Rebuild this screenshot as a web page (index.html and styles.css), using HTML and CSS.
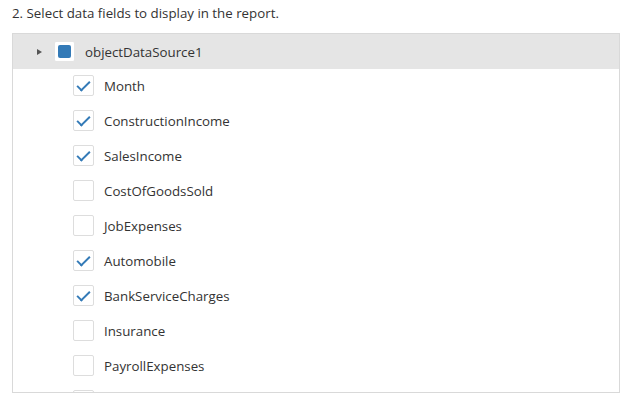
FILE: index.html
```html
<!DOCTYPE html>
<html lang="en">

<head>
    <meta charset="UTF-8">
    <meta name="viewport" content="width=device-width, initial-scale=1.0">
    <title>Report Wizard - Select Fields</title>
    <link rel="stylesheet" href="styles.css">
</head>

<body>
    <div class="wizard-step">
        <p class="step-title">2. Select data fields to display in the report.</p>

        <div class="field-tree">
            <div class="tree-root">
                <span class="expander"></span>
                <span class="check partial"><span class="partial-mark"></span></span>
                <span class="node-label">objectDataSource1</span>
            </div>

            <ul class="field-list">
                <li class="field"><span class="check checked"></span><span class="node-label">Month</span></li>
                <li class="field"><span class="check checked"></span><span class="node-label">ConstructionIncome</span></li>
                <li class="field"><span class="check checked"></span><span class="node-label">SalesIncome</span></li>
                <li class="field"><span class="check"></span><span class="node-label">CostOfGoodsSold</span></li>
                <li class="field"><span class="check"></span><span class="node-label">JobExpenses</span></li>
                <li class="field"><span class="check checked"></span><span class="node-label">Automobile</span></li>
                <li class="field"><span class="check checked"></span><span class="node-label">BankServiceCharges</span></li>
                <li class="field"><span class="check"></span><span class="node-label">Insurance</span></li>
                <li class="field"><span class="check"></span><span class="node-label">PayrollExpenses</span></li>
                <!-- next row is scrolled out of view -->
                <li class="field"><span class="check"></span></li>
            </ul>
        </div>
    </div>
</body>

</html>
```

FILE: styles.css
```css
/* Global Styles */
* {
    margin: 0;
    padding: 0;
    box-sizing: border-box;
    font-family: 'Open Sans', 'Noto Sans', sans-serif;
}

body {
    background-color: #fff;
    color: #333;
}

.wizard-step {
    padding: 4px 8px 0 12px;
}

.step-title {
    font-size: 13.3px;
    line-height: 18px;
    color: #333;
    margin-bottom: 11px;
}

/* Tree panel */
.field-tree {
    height: 360px;
    border: 1px solid #d9d9d9;
    overflow: hidden;
}

.tree-root {
    display: flex;
    align-items: center;
    height: 35px;
    background-color: #e5e5e5;
    padding-left: 24px;
}

.expander {
    width: 0;
    height: 0;
    border-top: 3px solid transparent;
    border-bottom: 3px solid transparent;
    border-left: 5px solid #555;
    margin-right: 12px;
}

.check {
    position: relative;
    flex: none;
    width: 21px;
    height: 21px;
    background-color: #fff;
    border: 1px solid #ddd;
    border-radius: 2px;
}

.tree-root .check {
    border-color: #e5e5e5;
}

.partial-mark {
    position: absolute;
    top: 3px;
    left: 3px;
    width: 13px;
    height: 13px;
    background-color: #337ab7;
    border-radius: 2px;
}

.check.checked::after {
    content: '';
    position: absolute;
    top: 2px;
    left: 6px;
    width: 5px;
    height: 11px;
    border-right: 2px solid #337ab7;
    border-bottom: 2px solid #337ab7;
    transform: rotate(45deg);
}

.node-label {
    font-size: 13.3px;
    margin-left: 10px;
    color: #333;
}

/* Field rows */
.field-list {
    list-style: none;
    padding-left: 60px;
}

.field {
    display: flex;
    align-items: center;
    height: 35px;
    padding-bottom: 2px;
}
```
